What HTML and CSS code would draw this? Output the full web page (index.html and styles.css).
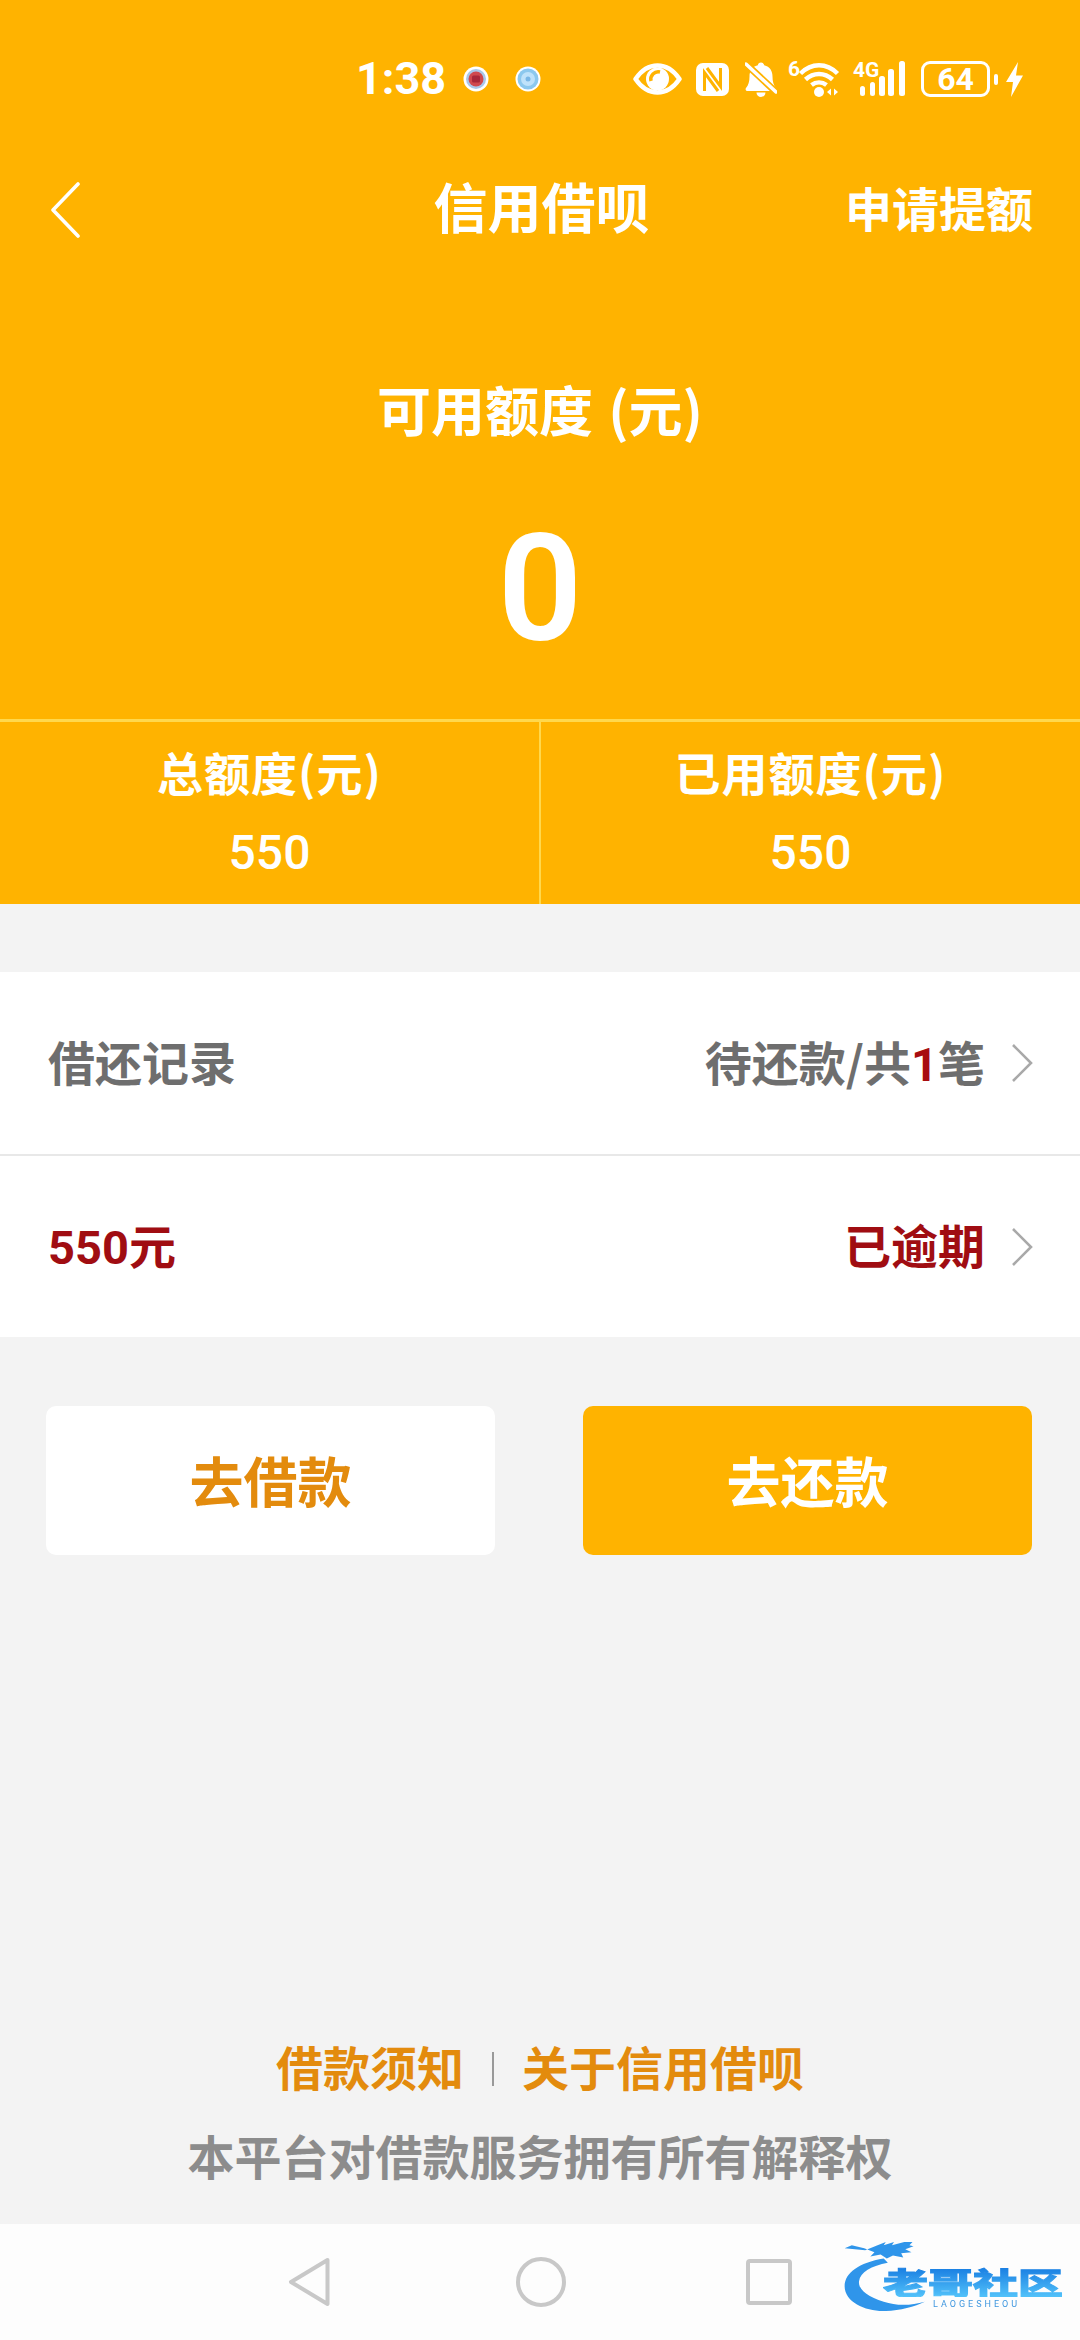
FILE: index.html
```html
<!DOCTYPE html>
<html lang="zh-CN">
  <head>
    <meta charset="UTF-8" />
    <meta name="viewport" content="width=device-width, initial-scale=1.0" />
    <title>信用借呗</title>
    <link rel="stylesheet" href="styles.css">
  </head>
  <body>
    <div class="page">
      <header class="hero">
        <div class="statusbar">
          <div class="status-left">
            <span class="time">1:38</span>
            <svg class="dot" viewBox="0 0 26 26">
              <circle cx="13" cy="13" r="12.5" fill="#fff" />
              <circle cx="13" cy="13" r="10" fill="#a9c8ea" />
              <circle cx="13" cy="13" r="7.5" fill="#d0494f" />
              <rect x="9" y="9.500" width="8" height="7" rx="1.500" fill="#a8283a" />
            </svg>
            <svg class="dot dot-second" viewBox="0 0 26 26">
              <circle cx="13" cy="13" r="12.5" fill="#fff" />
              <circle cx="13" cy="13" r="10.5" fill="#8cc8ee" />
              <circle cx="13" cy="13" r="7" fill="#bfe2fa" />
              <circle cx="13" cy="13" r="2.500" fill="#7ab7e6" />
            </svg>
          </div>
          <div class="status-right">
            <!-- eye -->
            <svg class="ic-eye" viewBox="0 0 49 32">
              <path d="M2.500 16C9 6.500 16.500 2.500 24.500 2.500S40 6.500 46.500 16C40 25.500 32.500 29.500 24.500 29.500S9 25.500 2.500 16Z" fill="none" stroke="#fff" stroke-width="4.500" stroke-linejoin="round" />
              <circle cx="24.500" cy="16" r="11.500" fill="#fff" />
              <path d="M18 18a7.500 7.500 0 0 1 9-9" fill="none" stroke="#ffb300" stroke-width="3.500" />
            </svg>
            <!-- nfc -->
            <svg class="ic-nfc" viewBox="0 0 33 33">
              <rect width="33" height="33" rx="7" fill="#fff" />
              <path d="M8.500 28V9.500L22 28M24.500 5v18.500L11 5" fill="none" stroke="#ffb300" stroke-width="3" />
            </svg>
            <!-- muted bell -->
            <svg class="ic-bell" viewBox="0 0 32 36">
              <path d="M16 1.500c1.800 0 3 1.200 3.200 2.700C25 5.600 27.500 10 27.500 15.500c0 5 1 8.500 3.500 11.500 1 1.500 0 3-1.500 3h-27C1 30 0 28.500 1 27c2.500-3 3.500-6.500 3.500-11.500C4.500 10 7 5.600 12.800 4.200 13 2.700 14.200 1.500 16 1.500Z" fill="#fff" />
              <path d="M11.500 31.500h9a4.500 4.500 0 0 1-9 0Z" fill="#fff" />
              <path d="M1 3l30 28" stroke="#ffb300" stroke-width="7" />
              <path d="M1 3l30 28" stroke="#fff" stroke-width="3.500" stroke-linecap="round" />
            </svg>
            <!-- wifi with 6 badge -->
            <div class="ic-wrap ic-wifi">
              <svg viewBox="0 0 52 38">
                <path d="M12.500 13.500C23.500 2.500 38.500 2.500 49.500 13.500M17.500 19.500c8-7.500 19-7.500 27 0M23.500 25c4.500-3.500 10.500-3.500 15 0" fill="none" stroke="#fff" stroke-width="4.500" />
                <circle cx="31" cy="32" r="5" fill="#fff" />
                <path d="M39 32l4-3.500v7ZM50 32l-4-3.500v7Z" fill="#fff" />
              </svg>
              <span class="ic-label">6</span>
            </div>
            <!-- cellular -->
            <div class="ic-wrap ic-signal">
              <svg viewBox="-7 0 53 36">
                <rect x="0" y="25" width="5" height="10" rx="2.500" fill="#fff" />
                <rect x="10" y="21" width="5" height="14" rx="2.500" fill="#fff" />
                <rect x="19" y="15" width="6" height="20" rx="2.500" fill="#fff" />
                <rect x="28" y="8" width="6" height="27" rx="2.500" fill="#fff" />
                <rect x="39" y="0" width="6" height="35" rx="2.500" fill="#fff" />
              </svg>
              <span class="ic-label">4G</span>
            </div>
            <div class="battery"><span class="battery-level">64</span></div>
            <span class="battery-nub"></span>
            <svg class="ic-bolt" viewBox="0 0 17 35">
              <path d="M12 0L0 20h7L5 35 17 13.500h-7Z" fill="#fff" />
            </svg>
          </div>
        </div>

        <nav class="topnav">
          <svg class="back" viewBox="0 0 30 56">
            <path d="M28 2L3 28l25 26" fill="none" stroke="#fff" stroke-width="3.600" stroke-linecap="round" stroke-linejoin="round" />
          </svg>
          <h1 class="title">信用借呗</h1>
          <a class="apply">申请提额</a>
        </nav>

        <div class="quota-label">可用额度 (元)</div>
        <div class="quota-value">0</div>

        <div class="stats">
          <div class="stat">
            <div class="stat-label">总额度(元)</div>
            <div class="stat-value">550</div>
          </div>
          <div class="stat">
            <div class="stat-label">已用额度(元)</div>
            <div class="stat-value">550</div>
          </div>
        </div>
      </header>

      <section class="list">
        <div class="row row-first">
          <span class="row-text">借还记录</span>
          <span class="row-side">
            <span class="row-text">待还款/共<b class="num-red">1</b>笔</span>
            <svg class="chev" viewBox="0 0 22 38"><path d="M2 1l18 18L2 37" fill="none" stroke="#a9a9a9" stroke-width="2.600" /></svg>
          </span>
        </div>
        <div class="row row-second">
          <span class="row-text red amount">550元</span>
          <span class="row-side">
            <span class="row-text red">已逾期</span>
            <svg class="chev" viewBox="0 0 22 38"><path d="M2 1l18 18L2 37" fill="none" stroke="#a9a9a9" stroke-width="2.600" /></svg>
          </span>
        </div>
      </section>

      <div class="actions">
        <button class="btn btn-light">去借款</button>
        <button class="btn btn-main">去还款</button>
      </div>

      <footer class="foot">
        <div class="foot-links">
          <a>借款须知</a>
          <i class="foot-sep"></i>
          <a>关于信用借呗</a>
        </div>
        <p class="foot-note">本平台对借款服务拥有所有解释权</p>
      </footer>

      <div class="navbar">
        <svg class="nav-back" viewBox="0 0 42 50">
          <path d="M39.500 3L3 25l36.500 22Z" fill="none" stroke="#c8c8c8" stroke-width="4" stroke-linejoin="round" />
        </svg>
        <svg class="nav-home" viewBox="0 0 50 50">
          <circle cx="25" cy="25" r="23" fill="none" stroke="#c8c8c8" stroke-width="4" />
        </svg>
        <svg class="nav-recent" viewBox="0 0 46 46">
          <rect x="2" y="2" width="42" height="42" rx="2" fill="none" stroke="#c8c8c8" stroke-width="4" />
        </svg>

        <div class="watermark">
          <svg class="dragon" viewBox="0 0 100 70">
            <path d="M40 18C16 22 2 32 2 45c0 16 22 25 40 24 14-.5 28-4 38-9-14 4-28 4-40 0C24 55 15 48 16 40c1-9 12-15 28-18Z" fill="#2f95ea" />
            <path d="M2 8l20 2 12-5 8-3-2 3 10-3-2 3 12-3 8 0-3 3 4 1-8 3 6 3-10 1 2 4-10-2-6 3-6-4-10 2 4-4-10-4-12-3Z" fill="#2f95ea" />
          </svg>
          <span class="wm-name">老哥社区</span>
          <span class="wm-sub">LAOGESHEOU</span>
        </div>
      </div>
    </div>
  </body>
</html>
```

FILE: styles.css
```css
* {
  box-sizing: border-box;
}
body {
  margin: 0;
  font-family: "Noto Sans CJK SC", "Noto Sans", sans-serif;
  background-color: #f3f3f3;
}
.page {
  width: 1080px;
  height: 2340px;
  display: flex;
  flex-direction: column;
  overflow: hidden;
}

/* top orange area */
.hero {
  height: 904px;
  background-color: #ffb300;
  color: #fff;
  display: flex;
  flex-direction: column;
}
.statusbar {
  height: 160px;
  padding: 60px 57px 0 356px;
  display: flex;
  justify-content: space-between;
  align-items: flex-start;
}
.status-left {
  height: 38px;
  display: flex;
  align-items: center;
}
.time {
  font-family: Roboto, sans-serif;
  font-size: 45px;
  font-weight: 700;
  line-height: 38px;
}
.dot {
  width: 26px;
  height: 26px;
  margin-left: 17px;
}
.dot-second {
  margin-left: 26px;
}
.status-right {
  height: 38px;
  display: flex;
  align-items: center;
}
.ic-wrap {
  position: relative;
}
.ic-wrap svg {
  display: block;
  width: 100%;
  height: 100%;
}
.ic-eye {
  width: 49px;
  height: 32px;
}
.ic-nfc {
  width: 33px;
  height: 33px;
  margin-left: 14px;
}
.ic-bell {
  width: 32px;
  height: 36px;
  margin-left: 16px;
}
.ic-wifi {
  width: 52px;
  height: 38px;
  margin-left: 11px;
}
.ic-signal {
  width: 53px;
  height: 36px;
  margin-left: 13px;
}
/* small network label sitting on the top left of an icon */
.ic-label {
  position: absolute;
  left: 0;
  top: 1px;
  font-family: Roboto, sans-serif;
  font-size: 21px;
  font-weight: 700;
  line-height: 16px;
}
.battery {
  width: 69px;
  height: 36px;
  margin-left: 15px;
  border: 3px solid #fff;
  border-radius: 9px;
  display: flex;
  justify-content: center;
  align-items: center;
}
.battery-level {
  font-family: Roboto, sans-serif;
  font-size: 32px;
  font-weight: 700;
  line-height: 30px;
}
.battery-nub {
  width: 4px;
  height: 11px;
  margin-left: 4px;
  background-color: #fff;
  border-radius: 2px;
}
.ic-bolt {
  width: 17px;
  height: 35px;
  margin-left: 8px;
}

.topnav {
  height: 100px;
  padding: 0 47px 0 50px;
  display: grid;
  grid-template-columns: 1fr auto 1fr;
  align-items: center;
}
.back {
  width: 30px;
  height: 56px;
}
.title {
  margin: 0;
  padding-bottom: 8px;
  font-size: 54px;
  font-weight: 700;
  line-height: 92px;
}
.apply {
  justify-self: end;
  padding-bottom: 8px;
  font-size: 47px;
  font-weight: 700;
}
.quota-label {
  margin-top: 109px;
  font-size: 54px;
  font-weight: 700;
  word-spacing: 3px;
  line-height: 80px;
  text-align: center;
}
.quota-value {
  margin-top: 61px;
  font-family: Roboto, sans-serif;
  font-size: 148px;
  font-weight: 600;
  line-height: 160px;
  text-align: center;
}
.stats {
  flex: 1;
  margin-top: 49px;
  border-top: 3px solid #ffd84d;
  display: flex;
}
.stat {
  flex: 1;
  padding-top: 19px;
  text-align: center;
}
.stat:first-child {
  border-right: 2px solid #ffd84d;
}
.stat-label {
  font-size: 46px;
  font-weight: 700;
  letter-spacing: 1px;
  line-height: 60px;
}
.stat-value {
  margin-top: 22px;
  font-family: Roboto, sans-serif;
  font-size: 48px;
  font-weight: 500;
  line-height: 60px;
}

/* record rows */
.list {
  margin-top: 68px;
  background-color: #fff;
}
.row {
  padding: 0 47px 0 48px;
  display: flex;
  justify-content: space-between;
  align-items: center;
  font-size: 47px;
  font-weight: 700;
  color: #6e6e6e;
}
.row-first {
  height: 184px;
  border-bottom: 2px solid #e8e8e8;
}
.row-second {
  height: 181px;
}
.row-text {
  padding-bottom: 6px;
}
.row-side {
  display: flex;
  align-items: center;
}
.chev {
  width: 22px;
  height: 38px;
  margin-left: 26px;
}
.num-red {
  font-family: Roboto, sans-serif;
  font-weight: 700;
  color: #a80d10;
}
.red {
  font-weight: 700;
  color: #a00d12;
}
.amount {
  font-family: Roboto, "Noto Sans CJK SC", sans-serif;
}

.actions {
  margin-top: 69px;
  padding: 0 48px 0 46px;
  display: flex;
  justify-content: space-between;
}
.btn {
  width: 449px;
  height: 149px;
  padding: 0 0 3px;
  border: none;
  border-radius: 10px;
  font-family: inherit;
  font-size: 54px;
  font-weight: 700;
}
.btn-light {
  background-color: #fff;
  color: #e38b0d;
}
.btn-main {
  background-color: #ffb300;
  color: #fff;
}

.foot {
  margin-top: auto;
  padding-bottom: 39px;
  text-align: center;
}
.foot-links {
  height: 60px;
  display: flex;
  justify-content: center;
  align-items: center;
  font-size: 47px;
  font-weight: 700;
  color: #e38b0d;
}
.foot-sep {
  width: 2px;
  height: 34px;
  margin: 8px 28px 0;
  background-color: #999;
}
.foot-note {
  margin: 30px 0 0;
  font-size: 47px;
  font-weight: 700;
  line-height: 60px;
  color: #8c8c8c;
}

/* system navigation */
.navbar {
  position: relative;
  height: 116px;
  flex-shrink: 0;
  padding: 33px 0 0 288px;
  background-color: #fdfdfd;
  display: flex;
  align-items: flex-start;
}
.nav-back {
  width: 42px;
  height: 50px;
}
.nav-home {
  width: 50px;
  height: 50px;
  margin-left: 186px;
}
.nav-recent {
  width: 46px;
  height: 46px;
  margin-top: 2px;
  margin-left: 180px;
}
.watermark {
  position: absolute;
  left: 842px;
  top: 16px;
  width: 226px;
  height: 76px;
  filter: blur(0.6px);
}
.dragon {
  position: absolute;
  left: 0;
  top: 0;
  width: 104px;
  height: 72px;
}
.wm-name {
  position: absolute;
  left: 41px;
  top: 25px;
  width: 120px;
  font-size: 30px;
  font-weight: 900;
  line-height: 32px;
  white-space: nowrap;
  transform: scaleX(1.5);
  transform-origin: left center;
  background: linear-gradient(#1478e0, #52c2fa);
  -webkit-background-clip: text;
  background-clip: text;
  color: transparent;
  -webkit-text-stroke: 1px transparent;
}
.wm-sub {
  position: absolute;
  left: 91px;
  top: 59px;
  font-family: Roboto, sans-serif;
  font-size: 9px;
  letter-spacing: 3px;
  line-height: 10px;
  color: #3f97df;
}
```
